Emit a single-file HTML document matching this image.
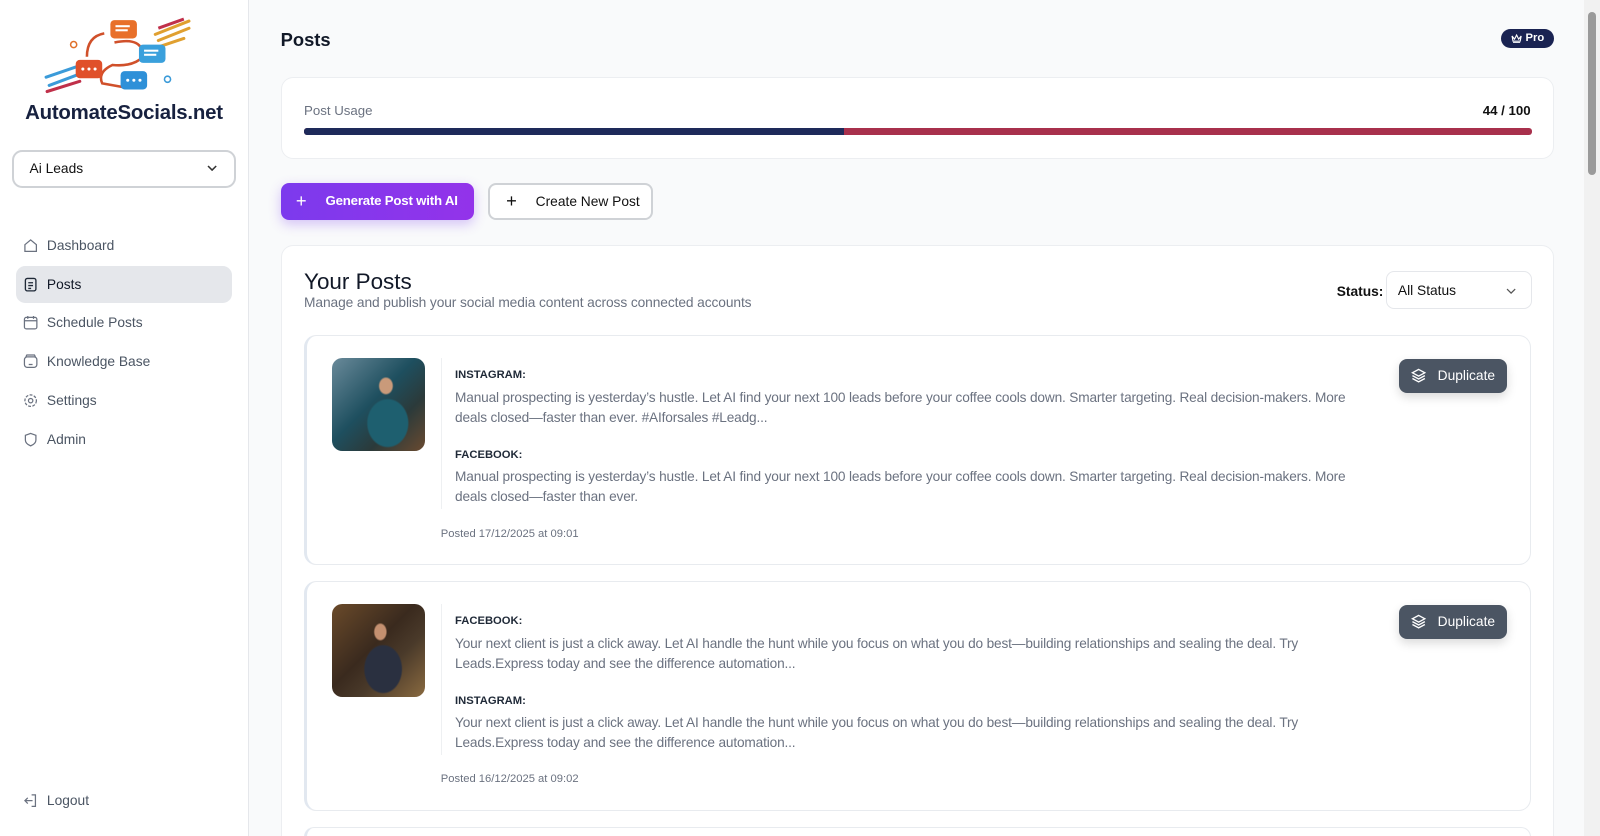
<!DOCTYPE html>
<html><head><meta charset="utf-8"><style>
*{box-sizing:border-box;margin:0;padding:0}
html,body{width:1600px;height:836px;overflow:hidden;background:#f9fafb;font-family:"Liberation Sans",sans-serif}
#w{zoom:1.0204;width:1568px;height:819px;position:relative;overflow:hidden}
.sb{position:absolute;left:0;top:0;width:244px;height:819px;background:#fff;border-right:1px solid #e5e7eb}
.abs{position:absolute}
.brand{left:0;width:243px;top:100px;text-align:center;font-weight:bold;font-size:20px;color:#17213f;letter-spacing:-0.2px}
.sel{left:12px;top:147px;width:219px;height:37px;border:2px solid #cfd2d6;border-radius:10px;font-size:13.5px;color:#111;padding:9px 15px}
.nav{left:16px;width:211px;height:36px;border-radius:9px;font-size:13.5px;color:#4b5563;padding:10px 0 0 30px}
.nav svg{position:absolute;left:7px;top:10px}
.nav.act{background:#e5e7eb;color:#111827}
.card{background:#fff;border:1px solid #eceef1;border-radius:12px}
.btn{border-radius:8px;font-size:13.5px;height:37px;padding:10px 0 0 0}
.post{left:298px;width:1202px;height:226px;background:#fff;border:1px solid #e8ebef;border-left:3px solid #e2e8f0;border-radius:12px}
.img{position:absolute;left:24px;top:22px;width:92px;height:91px;border-radius:10px}
.vl{position:absolute;left:131px;top:22px;width:1px;height:148px;background:#eef0f2}
.lb{position:absolute;left:145px;font-size:11px;font-weight:bold;color:#1f2937}
.tx{position:absolute;left:145px;width:900px;font-size:13.4px;letter-spacing:-0.15px;line-height:19.5px;color:#6b7280}
.ps{position:absolute;left:131px;font-size:11px;color:#6b7280}
.dup{position:absolute;left:1070px;top:23px;width:106px;height:33px;background:#4b5563;border-radius:8px;color:#fff;font-size:13.5px;padding:9px 0 0 38px;box-shadow:0 4px 10px rgba(0,0,0,.15)}
.dup svg{position:absolute;left:12px;top:9px}
</style></head><body><div id="w">
<div class="sb">
<svg class="abs" style="left:40px;top:16px" width="148" height="80" viewBox="0 0 148 80">
<path d="M5 60 L40 48 M8 68 L40 56" stroke="#3b9bd9" stroke-width="3" stroke-linecap="round"/>
<path d="M6 74 L38 64" stroke="#c0304a" stroke-width="3" stroke-linecap="round"/>
<path d="M112 18 L145 5 M115 24 L145 12 M110 32 L140 22" stroke="#e0a030" stroke-width="3" stroke-linecap="round"/>
<path d="M115 12 L140 3" stroke="#c0304a" stroke-width="3"/>
<path d="M45 40 Q45 20 62 17 M72 26 Q100 20 100 40 Q90 50 70 48 Q55 55 60 66 L82 70" stroke="#d0502a" stroke-width="2.5" fill="none"/>
<rect x="68" y="4" width="26" height="18" rx="4" fill="#e8702a"/><rect x="34" y="43" width="26" height="18" rx="4" fill="#e0502a"/>
<rect x="96" y="28" width="26" height="18" rx="4" fill="#3aa0dc"/><rect x="78" y="54" width="26" height="18" rx="4" fill="#2e90d8"/>
<g fill="#fff"><rect x="73" y="9" width="14" height="2"/><rect x="73" y="13" width="12" height="2"/><rect x="101" y="33" width="14" height="2"/><rect x="101" y="37" width="12" height="2"/><circle cx="41" cy="52" r="1.5"/><circle cx="47" cy="52" r="1.5"/><circle cx="53" cy="52" r="1.5"/><circle cx="85" cy="63" r="1.5"/><circle cx="91" cy="63" r="1.5"/><circle cx="97" cy="63" r="1.5"/></g>
<circle cx="32" cy="28" r="3" fill="none" stroke="#e0702a" stroke-width="1.5"/><circle cx="124" cy="62" r="3" fill="none" stroke="#3a9ad8" stroke-width="1.5"/>
</svg>
<div class="abs brand">AutomateSocials.net</div>
<div class="abs sel">Ai Leads<svg style="position:absolute;right:16px;top:13px" width="10" height="6"><path d="M1 1l4 4 4-4" stroke="#333" stroke-width="1.5" fill="none"/></svg></div>
<div class="abs nav" style="top:223px"><svg width="15" height="15" viewBox="0 0 16 16" fill="none" stroke="#6b7280" stroke-width="1.3"><path d="M2 7l6-5 6 5v7H2z"/></svg>Dashboard</div>
<div class="abs nav act" style="top:261px"><svg width="15" height="15" viewBox="0 0 16 16" fill="none" stroke="#1f2937" stroke-width="1.4"><rect x="2.5" y="1.5" width="11" height="13" rx="2"/><path d="M5.5 6h5M5.5 9h5M5.5 12h3"/></svg>Posts</div>
<div class="abs nav" style="top:299px"><svg width="15" height="15" viewBox="0 0 16 16" fill="none" stroke="#6b7280" stroke-width="1.3"><rect x="1.5" y="2.5" width="13" height="12" rx="2"/><path d="M1.5 6h13M5 1v3M11 1v3"/></svg>Schedule Posts</div>
<div class="abs nav" style="top:337px"><svg width="15" height="15" viewBox="0 0 16 16" fill="none" stroke="#6b7280" stroke-width="1.3"><rect x="1.5" y="3" width="13" height="11" rx="3"/><path d="M3 3l1-2h8l1 2M6 11h4"/></svg>Knowledge Base</div>
<div class="abs nav" style="top:375px"><svg width="15" height="15" viewBox="0 0 16 16" fill="none" stroke="#6b7280" stroke-width="1.3"><circle cx="8" cy="8" r="2.3"/><circle cx="8" cy="8" r="6" stroke-dasharray="3 1.5"/></svg>Settings</div>
<div class="abs nav" style="top:413px"><svg width="15" height="15" viewBox="0 0 16 16" fill="none" stroke="#6b7280" stroke-width="1.3"><path d="M8 1.5l5.5 2v5c0 3-3 5-5.5 6-2.5-1-5.5-3-5.5-6v-5z"/></svg>Admin</div>
<div class="abs nav" style="top:767px"><svg width="15" height="15" viewBox="0 0 16 16" fill="none" stroke="#6b7280" stroke-width="1.3"><path d="M9 2h4v12H9M2 8h8M5 5L2 8l3 3"/></svg>Logout</div>
</div>

<div class="abs" style="left:275px;top:28px;font-size:18px;font-weight:bold;color:#111827">Posts</div>
<div class="abs" style="left:1471px;top:28px;width:52px;height:19px;background:#1a2352;border-radius:10px;color:#fff;font-size:11px;font-weight:bold;padding:3px 0 0 24px"><svg style="position:absolute;left:10px;top:5px" width="11" height="9" viewBox="0 0 11 9" fill="none" stroke="#fff" stroke-width="1.1"><path d="M1 2l2.5 3L5.5 1l2 4L10 2 9 7H2z M2 8.5h7"/></svg>Pro</div>

<div class="abs card" style="left:275px;top:75px;width:1248px;height:81px">
<div class="abs" style="left:22px;top:25px;font-size:13px;color:#6b7280">Post Usage</div>
<div class="abs" style="right:22px;top:25px;font-size:13px;font-weight:bold;color:#111">44 / 100</div>
<div class="abs" style="left:22px;top:49px;width:1203px;height:7px;border-radius:3px;background:#a8304c;overflow:hidden"><div style="width:529px;height:7px;background:#1e2a5a"></div></div>
</div>

<div class="abs btn" style="left:275px;top:179px;width:190px;background:linear-gradient(90deg,#7c3aed,#9333ea);color:#fff;font-weight:bold;padding-left:44px;font-size:13px;letter-spacing:-0.2px;box-shadow:0 4px 12px rgba(124,58,237,.3)"><span style="position:absolute;left:15px;top:7px;font-size:18px;font-weight:normal">+</span>Generate Post with AI</div>
<div class="abs btn" style="left:478px;top:179px;width:162px;background:#fff;border:2px solid #cfd2d6;color:#111;padding-left:45px;padding-top:9px"><span style="position:absolute;left:16px;top:5px;font-size:18px">+</span>Create New Post</div>

<div class="abs card" style="left:275px;top:240px;width:1248px;height:600px">
<div class="abs" style="left:22px;top:23px;font-size:22px;color:#111827">Your Posts</div>
<div class="abs" style="left:22px;top:48px;font-size:13.5px;letter-spacing:-0.1px;color:#6b7280">Manage and publish your social media content across connected accounts</div>
<div class="abs" style="left:1034px;top:37px;font-size:13.5px;font-weight:bold;color:#111">Status:</div>
<div class="abs" style="left:1082px;top:25px;width:143px;height:37px;border:1px solid #e5e7eb;border-radius:8px;font-size:13.5px;color:#111;padding:10px 11px">All Status<svg style="position:absolute;right:14px;top:15px" width="10" height="6"><path d="M1 1l4 4 4-4" stroke="#555" stroke-width="1.2" fill="none"/></svg></div>
</div>

<div class="abs post" style="top:328px">
<div class="img" style="background:radial-gradient(ellipse at 58% 30%,#c99a7a 0 8%,transparent 10%),radial-gradient(ellipse at 60% 70%,#1e5f6f 0 25%,transparent 27%),linear-gradient(135deg,#6a8a9a,#1e4f5f 45%,#2b3a3a 70%,#6a4a30)"></div>
<div class="vl"></div>
<div class="lb" style="top:33px">INSTAGRAM:</div>
<div class="tx" style="top:51px">Manual prospecting is yesterday’s hustle. Let AI find your next 100 leads before your coffee cools down. Smarter targeting. Real decision-makers. More deals closed—faster than ever. #AIforsales #Leadg...</div>
<div class="lb" style="top:111px">FACEBOOK:</div>
<div class="tx" style="top:129px">Manual prospecting is yesterday’s hustle. Let AI find your next 100 leads before your coffee cools down. Smarter targeting. Real decision-makers. More deals closed—faster than ever.</div>
<div class="ps" style="top:188px">Posted 17/12/2025 at 09:01</div>
<div class="dup"><svg width="15" height="15" viewBox="0 0 16 16" fill="none" stroke="#fff" stroke-width="1.4"><path d="M8 1.5l6.5 3.5L8 8.5 1.5 5z M1.5 8L8 11.5 14.5 8 M1.5 11L8 14.5 14.5 11"/></svg>Duplicate</div>
</div>

<div class="abs post" style="top:569px">
<div class="img" style="background:radial-gradient(ellipse at 52% 30%,#c49070 0 8%,transparent 10%),radial-gradient(ellipse at 55% 70%,#2a3040 0 25%,transparent 27%),linear-gradient(135deg,#6a4a2a,#3a2a1e 45%,#4a3a2a 65%,#8a6a40)"></div>
<div class="vl"></div>
<div class="lb" style="top:33px">FACEBOOK:</div>
<div class="tx" style="top:51px">Your next client is just a click away. Let AI handle the hunt while you focus on what you do best—building relationships and sealing the deal. Try Leads.Express today and see the difference automation...</div>
<div class="lb" style="top:111px">INSTAGRAM:</div>
<div class="tx" style="top:129px">Your next client is just a click away. Let AI handle the hunt while you focus on what you do best—building relationships and sealing the deal. Try Leads.Express today and see the difference automation...</div>
<div class="ps" style="top:188px">Posted 16/12/2025 at 09:02</div>
<div class="dup"><svg width="15" height="15" viewBox="0 0 16 16" fill="none" stroke="#fff" stroke-width="1.4"><path d="M8 1.5l6.5 3.5L8 8.5 1.5 5z M1.5 8L8 11.5 14.5 8 M1.5 11L8 14.5 14.5 11"/></svg>Duplicate</div>
</div>
<div class="abs post" style="top:810px;height:20px"></div>

<div class="abs" style="left:1552px;top:0;width:16px;height:819px;background:#f1f1f1"></div>
<div class="abs" style="left:1556px;top:12px;width:8px;height:160px;background:#9a9a9a;border-radius:4px"></div>
</div></body></html>
